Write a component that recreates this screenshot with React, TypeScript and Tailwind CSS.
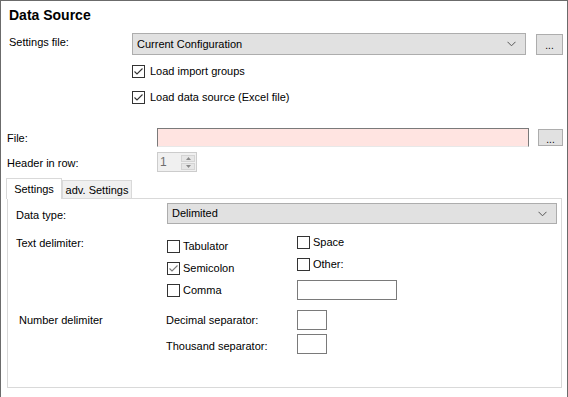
import React from 'react';

const Check = ({ checked, label, light, gap = 'ml-[5px]' }: { checked?: boolean; label: string; light?: boolean; gap?: string }) => (
    <div className='flex items-center h-[13px]'>
        <div className='w-[13px] h-[13px] border border-[#333333] bg-white flex items-center justify-center shrink-0'>
            {checked && (
                <svg width="11" height="11" viewBox="0 0 11 11">
                    <polyline points="1.5,5.5 4,8 9.5,2.5" fill="none" stroke={light ? '#7a7a7a' : '#333333'} strokeWidth="1.1" />
                </svg>
            )}
        </div>
        <span className={`${gap} leading-[13px] whitespace-nowrap`}>{label}</span>
    </div>
);

const Chevron = () => (
    <svg width="9" height="6" viewBox="0 0 9 6" className='shrink-0'>
        <polyline points="0.5,0.8 4.5,4.8 8.5,0.8" fill="none" stroke="#555555" strokeWidth="1" />
    </svg>
);

const Combo = ({ text, className }: { text: string; className: string }) => (
    <div className={`flex items-center justify-between bg-[#e1e1e1] border border-[#adadad] pl-[4px] pr-[9px] ${className}`}>
        <span className='whitespace-nowrap'>{text}</span>
        <Chevron />
    </div>
);

const DotsButton = ({ className }: { className: string }) => (
    <div className={`flex items-center justify-center bg-[#e1e1e1] border border-[#adadad] text-[10px] leading-none ${className}`}>
        <span className='mt-[4px]'>...</span>
    </div>
);

export default function App() {
    return (
        <div className="w-[568px] h-[397px] bg-white border-l border-t border-r border-[#6b6b6b] overflow-hidden text-black text-[11px] font-['Liberation_Sans',Arial,sans-serif]">
            <div className='pt-[5px] pl-[8px] h-[23px]'>
                <div className='text-[14px] font-bold leading-[18px]'>Data Source</div>
            </div>

            <div className='flex items-center mt-[9px] pl-[8px] h-[22px]'>
                <div className='w-[123px] mb-[3px]'>Settings file:</div>
                <Combo text='Current Configuration' className='w-[394px] h-[22px]' />
                <DotsButton className='ml-[10px] w-[27px] h-[21px]' />
            </div>

            <div className='mt-[10px] pl-[131px]'>
                <Check checked label='Load import groups' />
            </div>
            <div className='mt-[13px] pl-[131px]'>
                <Check checked label='Load data source (Excel file)' />
            </div>

            <div className='flex items-start mt-[24px] pl-[6px] h-[19px]'>
                <div className='w-[150px] leading-[19px] pt-[1px]'>File:</div>
                <div className='w-[372px] h-[19px] bg-[#ffe4e1] border-t border-l border-r border-[#7a7a7a] border-b border-b-[#e8e8e8]'></div>
                <DotsButton className='ml-[9px] mt-[1px] w-[25px] h-[17px]' />
            </div>

            <div className='flex items-center mt-[5px] pl-[6px] h-[20px]'>
                <div className='w-[150px] mt-[2px]'>Header in row:</div>
                <div className='w-[40px] h-[20px] bg-[#f0f0f0] border border-[#cccccc] flex items-center justify-between pl-[2px] pr-[1px]'>
                    <span className='text-[#6d6d6d] text-[12px]'>1</span>
                    <div className='flex flex-col gap-[1px] w-[14px]'>
                        <div className='h-[7px] bg-[#e6e6e6] border border-[#d4d4d4] flex items-center justify-center'>
                            <svg width="5" height="3" viewBox="0 0 5 3"><polygon points="0,3 2.5,0 5,3" fill="#8a8a8a" /></svg>
                        </div>
                        <div className='h-[7px] bg-[#e6e6e6] border border-[#d4d4d4] flex items-center justify-center'>
                            <svg width="5" height="3" viewBox="0 0 5 3"><polygon points="0,0 2.5,3 5,0" fill="#8a8a8a" /></svg>
                        </div>
                    </div>
                </div>
            </div>

            <div className='mt-[5px] ml-[6px] w-[555px]'>
                <div className='flex items-end h-[21px]'>
                    <div className='relative z-10 ml-[-1px] w-[56px] h-[21px] mb-[-1px] bg-white border border-b-0 border-[#d9d9d9] flex items-center justify-center'>
                        <span>Settings</span>
                    </div>
                    <div className='w-[70px] h-[18px] bg-[#f0f0f0] border border-b-0 border-[#d9d9d9] flex items-center justify-center'>
                        <span className='mt-[2px]'>adv. Settings</span>
                    </div>
                </div>
                <div className='h-[190px] bg-white border border-[#d9d9d9] pl-[8px]'>
                    <div className='flex items-center mt-[4px] h-[21px]'>
                        <div className='w-[151px] mt-[3px]'>Data type:</div>
                        <Combo text='Delimited' className='w-[390px] h-[21px]' />
                    </div>

                    <div className='flex mt-[9px]'>
                        <div className='w-[151px] pt-[2px]'>Text delimiter:</div>
                        <div className='w-[130px] pt-[7px] flex flex-col gap-[9px]'>
                            <Check gap='ml-[3px]' label='Tabulator' />
                            <Check gap='ml-[3px]' checked light label='Semicolon' />
                            <Check gap='ml-[3px]' label='Comma' />
                        </div>
                        <div className='pt-[3px] flex flex-col gap-[9px]'>
                            <Check gap='ml-[3px]' label='Space' />
                            <Check gap='ml-[3px]' label='Other:' />
                            <div className='w-[100px] h-[20px] border border-[#7a7a7a] bg-white'></div>
                        </div>
                    </div>

                    <div className='flex mt-[10px]'>
                        <div className='w-[150px] pl-[3px] leading-[20px]'>Number delimiter</div>
                        <div className='flex flex-col gap-[4px]'>
                            <div className='flex items-center h-[20px]'>
                                <div className='w-[131px]'>Decimal separator:</div>
                                <div className='w-[30px] h-[20px] border border-[#7a7a7a] bg-white'></div>
                            </div>
                            <div className='flex items-center h-[20px]'>
                                <div className='w-[131px] mt-[5px]'>Thousand separator:</div>
                                <div className='w-[30px] h-[20px] border border-[#7a7a7a] bg-white'></div>
                            </div>
                        </div>
                    </div>
                </div>
            </div>
        </div>
    );
}
